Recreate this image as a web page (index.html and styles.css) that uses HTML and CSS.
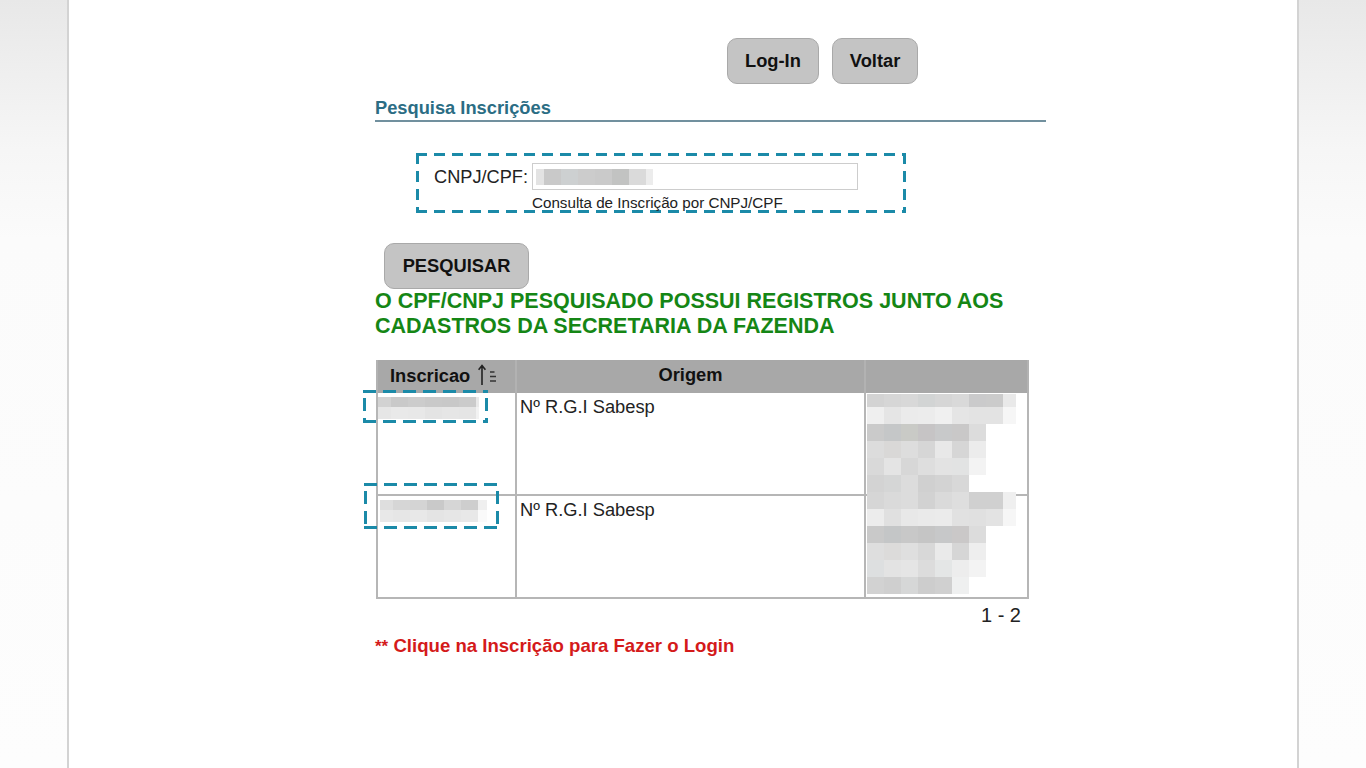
FILE: index.html
```html
<!DOCTYPE html>
<html lang="pt-BR">
<head>
<meta charset="utf-8">
<title>Pesquisa Inscrições</title>
<link rel="stylesheet" href="styles.css">
</head>
<body>
<div class="page">
  <div class="content">
    <div class="topbar">
      <button class="btn">Log-In</button>
      <button class="btn">Voltar</button>
    </div>

    <h2 class="section-title">Pesquisa Inscrições</h2>

    <div class="search-box dashed">
      <div class="field-row">
        <label class="field-label">CNPJ/CPF:</label>
        <div class="input"><div class="redact-input"></div></div>
      </div>
      <div class="hint">Consulta de Inscrição por CNPJ/CPF</div>
    </div>

    <button class="btn btn-search">PESQUISAR</button>

    <p class="result-msg">O CPF/CNPJ PESQUISADO POSSUI REGISTROS JUNTO AOS<br>CADASTROS DA SECRETARIA DA FAZENDA</p>

    <div class="table-wrap">
      <table class="grid">
        <colgroup>
          <col class="c1"><col class="c2"><col class="c3">
        </colgroup>
        <thead>
          <tr>
            <th class="th-insc">Inscricao<svg class="sort-icon" width="22" height="24" viewBox="0 0 22 24"><path d="M4 3v19M0.6 6.8L4 2.6l3.4 4.2" fill="none" stroke="#222" stroke-width="1.6"/><path d="M12 9h4.5M12 13.5h6M12 18h6" stroke="#333" stroke-width="1.3"/></svg></th>
            <th>Origem</th>
            <th></th>
          </tr>
        </thead>
        <tbody>
          <tr class="row">
            <td><div class="rid rid-1"><div class="rid1-a"></div><div class="rid1-b"></div></div></td>
            <td class="origem">Nº R.G.I Sabesp</td>
            <td class="extra">
              <div class="mosaic">
                <div class="mz mz-r0"></div><div class="mz mz-r1"></div><div class="mz mz-r2"></div>
                <div class="mz mz-r3"></div><div class="mz mz-r4"></div><div class="mz mz-r5"></div>
                <div class="mz mz-r6"></div><div class="mz mz-r7"></div><div class="mz mz-r8"></div>
                <div class="mz mz-r9"></div><div class="mz mz-r10"></div><div class="mz mz-r11"></div>
              </div>
            </td>
          </tr>
          <tr class="row">
            <td><div class="rid rid-2"><div class="rid2-a"></div><div class="rid2-b"></div></div></td>
            <td class="origem">Nº R.G.I Sabesp</td>
            <td class="extra"></td>
          </tr>
        </tbody>
      </table>
      <div class="annot annot-1 dashed-sm"></div>
      <div class="annot annot-2 dashed-sm"></div>
    </div>

    <div class="pager">1 - 2</div>

    <p class="login-note"><span class="stars">**</span> Clique na Inscrição para Fazer o Login</p>
  </div>
</div>
</body>
</html>
```

FILE: styles.css
```css
* { box-sizing: border-box; }

html, body { height: 100%; }

body {
  margin: 0;
  font-family: "Liberation Sans", Arial, sans-serif;
  color: #222;
  background: linear-gradient(#e8e8e8 0, #f6f6f6 150px, #fbfbfb 240px, #fdfdfd 768px);
}

.page {
  width: 1232px;
  min-height: 100vh;
  margin: 0 auto;
  background: #fff;
  border-left: 2px solid #d3d3d3;
  border-right: 2px solid #d3d3d3;
}

.content {
  margin-left: 306px;
  width: 671px;
  padding-top: 38px;
}

/* buttons */
.topbar {
  display: flex;
  gap: 13px;
  padding-left: 352px;
}

.btn {
  display: block;
  height: 46px;
  padding: 0 17px;
  font-family: "Liberation Sans", Arial, sans-serif;
  font-weight: bold;
  font-size: 18.3px;
  color: #111;
  background: #c4c4c4;
  border: 1px solid #a9a9a9;
  border-radius: 10px;
}

.section-title {
  margin: 14px 0 0;
  font-size: 18.3px;
  line-height: 20px;
  font-weight: bold;
  color: #2b6d84;
  padding-bottom: 2px;
  border-bottom: 2px solid #71909e;
}

/* dashed annotation frames */
.dashed {
  background:
    repeating-linear-gradient(90deg, #1b8aa8 0 11px, transparent 11px 18px) top left / 100% 3px no-repeat,
    repeating-linear-gradient(90deg, #1b8aa8 0 11px, transparent 11px 18px) bottom left / 100% 3px no-repeat,
    repeating-linear-gradient(180deg, #1b8aa8 0 11px, transparent 11px 18px) top left / 3px 100% no-repeat,
    repeating-linear-gradient(180deg, #1b8aa8 0 11px, transparent 11px 18px) top right / 3px 100% no-repeat;
}

.dashed-sm {
  background:
    repeating-linear-gradient(90deg, #1b8aa8 0 13px, transparent 13px 20px) top left / 100% 3px no-repeat,
    repeating-linear-gradient(90deg, #1b8aa8 0 13px, transparent 13px 20px) bottom left / 100% 3px no-repeat,
    repeating-linear-gradient(180deg, #1b8aa8 0 13px, transparent 13px 20px) 0 8px / 3px 100% no-repeat,
    repeating-linear-gradient(180deg, #1b8aa8 0 13px, transparent 13px 20px) right 8px / 3px 100% no-repeat;
}

.search-box {
  margin: 31px 0 0 41px;
  width: 490px;
  height: 60px;
  padding: 10px 0 0 18px;
}

.field-row {
  display: flex;
  align-items: center;
}

.field-label {
  width: 98px;
  font-size: 18.2px;
  line-height: 20px;
  color: #222;
}

.input {
  width: 326px;
  height: 27px;
  border: 1px solid #cdcdcd;
  padding: 5px 0 0 3px;
  background: #fff;
}

.redact-input {
  width: 117px;
  height: 16px;
  background: linear-gradient(90deg, #e3e3e3 0 8px, #c9c9c9 8px 25px, #cdd0d1 25px 42px, #cccccc 42px 59px, #cacaca 59px 76px, #c2c3c2 76px 93px, #dadada 93px 110px, #ececec 110px);
}

.hint {
  margin: 4px 0 0 98px;
  font-size: 15.2px;
  line-height: 17px;
  color: #222;
}

.btn-search {
  margin: 30px 0 0 9px;
  width: 145px;
  padding: 0;
}

.result-msg {
  margin: 0;
  font-size: 21.5px;
  line-height: 25px;
  font-weight: bold;
  color: #158615;
}

/* table */
.table-wrap {
  position: relative;
  margin: 21px 0 0 1px;
  width: 653px;
}

.grid {
  width: 653px;
  border-collapse: separate;
  border-spacing: 0;
  table-layout: fixed;
}

.c1 { width: 139px; }
.c2 { width: 349px; }
.c3 { width: 165px; }

.grid th {
  height: 33px;
  padding: 0 0 3px;
  background: #a8a8a8;
  border-left: 2px solid #b2b2b2;
  font-size: 18.3px;
  font-weight: bold;
  color: #111;
  text-align: center;
  vertical-align: middle;
}

.grid th:last-child { border-right: 2px solid #b2b2b2; }

.grid th.th-insc {
  text-align: left;
  padding-left: 12px;
  white-space: nowrap;
}

.sort-icon {
  vertical-align: -5px;
  margin-left: 8px;
}

.grid .row { height: 103px; }

.grid td {
  padding: 0;
  vertical-align: top;
  border-left: 2px solid #b6b6b6;
  border-bottom: 2px solid #b6b6b6;
}

.grid td:last-child { border-right: 2px solid #b6b6b6; }

.grid td.origem {
  padding: 4px 0 0 3px;
  font-size: 18.3px;
  line-height: 20px;
  color: #222;
}

.grid td.extra { position: relative; }

.rid { margin-top: 4px; }
.rid-1 { margin-left: 0; }
.rid-2 { margin-left: 2px; }

.rid1-a, .rid1-b { width: 101px; }
.rid1-a { height: 10px; background: linear-gradient(90deg, #d2d2d2 0 13px, #c9c9c9 13px 30px, #cccccc 30px 47px, #c9c9c9 47px 64px, #c8c8c8 64px 81px, #cbcbcb 81px 98px, #e9e9e9 98px); }
.rid1-b { height: 12px; background: linear-gradient(90deg, #e6e6e6 0 13px, #e9e9e9 13px 30px, #e8e8e8 30px 47px, #e4e4e4 47px 64px, #e6e6e6 64px 81px, #e5e5e5 81px 98px, #f2f2f2 98px); }

.rid2-a, .rid2-b { width: 107px; }
.rid2-a { height: 10px; background: linear-gradient(90deg, #dedede 0 13px, #d6d6d6 13px 30px, #d4d4d4 30px 47px, #c9c9c9 47px 64px, #d6d6d6 64px 81px, #cecece 81px 98px, #efefef 98px); }
.rid2-b { height: 12px; background: linear-gradient(90deg, #e8e8e8 0 13px, #e6e6e6 13px 30px, #e8e8e8 30px 47px, #e4e4e4 47px 64px, #e6e6e6 64px 81px, #e8e8e8 81px 98px, #fafafa 98px); }

/* redaction mosaic overlaying both rows of the last column */
.mosaic {
  position: absolute;
  left: 1px;
  top: 1px;
  z-index: 1;
}

.mz { height: 17px; }
.mz-r0 { height: 13px; width: 149px; background: linear-gradient(90deg, #d3d3d3 0 17px, #d6d6d6 17px 34px, #d8d8d8 34px 51px, #d2d4d4 51px 68px, #d6d6d6 68px 85px, #d9d9d9 85px 102px, #cacacb 102px 119px, #cbcbcb 119px 136px, #e9e9e9 136px); }
.mz-r1 { width: 149px; background: linear-gradient(90deg, #efefef 0 17px, #e5e5e5 17px 34px, #ebebeb 34px 51px, #ececec 51px 68px, #f0f0f0 68px 85px, #e5e5e5 85px 102px, #e3e3e3 102px 119px, #e3e3e3 119px 136px, #f6f6f6 136px); }
.mz-r2 { width: 119px; background: linear-gradient(90deg, #cacaca 0 17px, #c5c7c8 17px 34px, #c9cac6 34px 51px, #c6c4c5 51px 68px, #c8c9ca 68px 85px, #c9c8c8 85px 102px, #dcdcdc 102px); }
.mz-r3 { width: 119px; background: linear-gradient(90deg, #dcdcdc 0 17px, #d9d8d7 17px 34px, #dddddd 34px 51px, #d6d6d6 51px 68px, #e8e8e8 68px 85px, #d6d6d6 85px 102px, #ececec 102px); }
.mz-r4 { width: 119px; background: linear-gradient(90deg, #d9d9d9 0 17px, #e4e4e4 17px 34px, #d7d7d7 34px 51px, #dedede 51px 68px, #e3e3e3 68px 85px, #e2e3e3 85px 102px, #f3f3f3 102px); }
.mz-r5 { width: 102px; background: linear-gradient(90deg, #d3d3d3 0 17px, #d5d6d6 17px 34px, #dcdcdc 34px 51px, #d0d0d0 51px 68px, #d3d3d3 68px 85px, #d8d8d8 85px); }
.mz-r6 { width: 149px; background: linear-gradient(90deg, #d6d6d6 0 17px, #dadada 17px 34px, #dcdcdc 34px 51px, #d2d2d2 51px 68px, #dadada 68px 85px, #dedede 85px 102px, #d0d0d0 102px 119px, #d0d0d0 119px 136px, #efefef 136px); }
.mz-r7 { width: 149px; background: linear-gradient(90deg, #ececec 0 17px, #e0e0e0 17px 34px, #e8e8e8 34px 51px, #eaeaea 51px 68px, #ebebeb 68px 85px, #e1e1e1 85px 102px, #e0e0e0 102px 119px, #e3e3e3 119px 136px, #f6f6f6 136px); }
.mz-r8 { width: 119px; background: linear-gradient(90deg, #c9c9c9 0 17px, #c4c6c7 17px 34px, #c8c8c8 34px 51px, #c5c5c5 51px 68px, #c7c8c9 68px 85px, #cac8c8 85px 102px, #dcdcdc 102px); }
.mz-r9 { width: 119px; background: linear-gradient(90deg, #dedede 0 17px, #dcdbda 17px 34px, #dfdfdf 34px 51px, #d8d8d8 51px 68px, #eaeaea 68px 85px, #d6d6d6 85px 102px, #eeeeee 102px); }
.mz-r10 { width: 119px; background: linear-gradient(90deg, #dddfe0 0 17px, #e3e3e3 17px 34px, #e5e5e5 34px 51px, #dcdcdc 51px 68px, #e4e6e6 68px 85px, #ededed 85px 102px, #f3f3f3 102px); }
.mz-r11 { width: 102px; background: linear-gradient(90deg, #d2d2d2 0 17px, #cfcfcf 17px 34px, #d6d7d7 34px 51px, #cdcdcd 51px 68px, #d0d0d0 68px 85px, #eff0f0 85px); }

/* annotation boxes lying over the first column */
.annot {
  position: absolute;
  z-index: 2;
}
.annot-1 { left: -13px; top: 30px; width: 125px; height: 33px; }
.annot-2 { left: -12px; top: 123px; width: 135px; height: 46px; }

.pager {
  width: 653px;
  margin: 5px 0 0 1px;
  padding-right: 8px;
  text-align: right;
  font-size: 20px;
  line-height: 22px;
  color: #222;
}

.login-note {
  margin: 10px 0 0;
  font-size: 18.6px;
  line-height: 20px;
  font-weight: bold;
  color: #d41a1a;
}

.stars { font-size: 17px; }
```
